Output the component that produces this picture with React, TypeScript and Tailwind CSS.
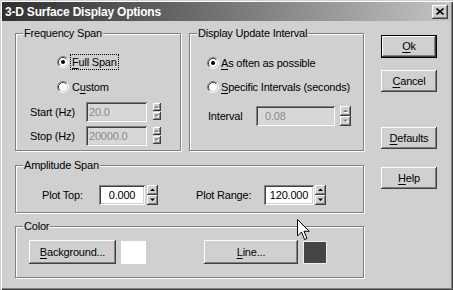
import React from "react";

const RAISED =
  "shadow-[inset_-1px_-1px_0_#404040,inset_1px_1px_0_#ffffff,inset_-2px_-2px_0_#808080]";
const SUNKEN =
  "shadow-[inset_1px_1px_0_#808080,inset_-1px_-1px_0_#ffffff,inset_2px_2px_0_#404040,inset_-2px_-2px_0_#d0d0d0]";
const ETCHED =
  "border border-[#808080] shadow-[inset_1px_1px_0_#ffffff,1px_1px_0_#ffffff]";

function U({ children }: { children: React.ReactNode }) {
  return <span className="underline underline-offset-[2px] decoration-1">{children}</span>;
}

function Radio({ checked }: { checked?: boolean }) {
  return (
    <svg width="12" height="12" viewBox="0 0 12 12" className="shrink-0">
      <circle cx="6" cy="6" r="4.5" fill="#ffffff" />
      <path d="M2.11 9.89 A5.5 5.5 0 0 1 9.89 2.11" fill="none" stroke="#808080" strokeWidth="1" />
      <path d="M9.89 2.11 A5.5 5.5 0 0 1 2.11 9.89" fill="none" stroke="#ffffff" strokeWidth="1" />
      <path d="M2.82 9.18 A4.5 4.5 0 0 1 9.18 2.82" fill="none" stroke="#404040" strokeWidth="1" />
      <path d="M9.18 2.82 A4.5 4.5 0 0 1 2.82 9.18" fill="none" stroke="#d0d0d0" strokeWidth="1" />
      {checked && <circle cx="6" cy="6" r="2" fill="#000000" />}
    </svg>
  );
}

function Arrow({ up, disabled }: { up?: boolean; disabled?: boolean }) {
  const pts = up ? "0,3 5,3 2.5,0.5" : "0,0.5 5,0.5 2.5,3";
  return (
    <svg width="6" height="4" viewBox="0 0 6 4">
      {disabled && (
        <polygon points={up ? "1,4 6,4 3.5,1.5" : "1,1.5 6,1.5 3.5,4"} fill="#ffffff" />
      )}
      <polygon points={pts} fill={disabled ? "#808080" : "#000000"} />
    </svg>
  );
}

function Spin({ disabled, narrow }: { disabled?: boolean; narrow?: boolean }) {
  if (narrow) {
    return (
      <div className="ml-[6px] mt-[1px] self-start flex flex-col gap-[1px] w-[8px]">
        <div className={`h-[8px] w-[8px] bg-[#d0d0d0] flex items-center justify-center ${RAISED}`}>
          <Arrow up disabled={disabled} />
        </div>
        <div className={`h-[8px] w-[8px] bg-[#d0d0d0] flex items-center justify-center ${RAISED}`}>
          <Arrow disabled={disabled} />
        </div>
      </div>
    );
  }
  return (
    <div className="flex flex-col w-[11px] h-[20px]">
      <div className={`h-[10px] w-[11px] bg-[#d0d0d0] flex items-center justify-center ${RAISED}`}>
        <Arrow up disabled={disabled} />
      </div>
      <div className={`h-[10px] w-[11px] bg-[#d0d0d0] flex items-center justify-center ${RAISED}`}>
        <Arrow disabled={disabled} />
      </div>
    </div>
  );
}

function Legend({ children }: { children: React.ReactNode }) {
  return (
    <span className="absolute left-[7px] top-[-9px] px-[1px] leading-[16px] bg-[#d0d0d0] whitespace-nowrap">
      {children}
    </span>
  );
}

export default function App() {
  return (
    <div className="relative w-[453px] h-[290px] overflow-hidden bg-[#d0d0d0] p-[2px] flex flex-col text-[11px] tracking-[-0.2px] leading-none text-black font-['Liberation_Sans',Arial,sans-serif] shadow-[inset_1px_1px_0_#d0d0d0,inset_2px_2px_0_#ffffff,inset_-1px_-1px_0_#404040,inset_-2px_-2px_0_#808080]">
      {/* Title bar */}
      <div className="h-[19px] shrink-0 flex items-center justify-between pl-[3px] pr-[3px] bg-linear-to-r from-[#303030] to-[#c4c4c4]">
        <span className="text-white font-bold text-[12px] whitespace-nowrap">3-D Surface Display Options</span>
        <div className={`w-[16px] h-[14px] bg-[#d0d0d0] flex items-center justify-center ${RAISED}`}>
          <svg width="8" height="7" viewBox="0 0 8 7">
            <path d="M0.5 0.5 L7.5 6.5 M7.5 0.5 L0.5 6.5" stroke="#000000" strokeWidth="1.6" />
          </svg>
        </div>
      </div>

      <div className="flex">
        {/* Left column */}
        <div className="ml-[13px] w-[349px] flex flex-col">
          <div className="mt-[12px] flex gap-[8px]">
            {/* Frequency Span */}
            <div className={`relative w-[166px] h-[118px] ${ETCHED} flex flex-col`}>
              <Legend>Frequency Span</Legend>
              <div className="mt-[20px] ml-[41px] h-[16px] flex items-center">
                <Radio checked />
                <span className="ml-[1px] px-[1px] h-[16px] flex items-center border border-dotted border-black">
                  <span>
                    <U>F</U>ull Span
                  </span>
                </span>
              </div>
              <div className="mt-[9px] ml-[41px] h-[16px] flex items-center">
                <Radio />
                <span className="ml-[3px]">
                  C<U>u</U>stom
                </span>
              </div>
              <div className="mt-[7px] ml-[14px] h-[20px] flex items-center">
                <span className="w-[56px]">Start (Hz)</span>
                <div className={`w-[61px] h-[20px] bg-[#d8d8d8] ${SUNKEN} flex items-center pl-[3px] text-[#8a8a8a]`}>
                  20.0
                </div>
                <Spin narrow disabled />
              </div>
              <div className="mt-[4px] ml-[14px] h-[20px] flex items-center">
                <span className="w-[56px]">Stop (Hz)</span>
                <div className={`w-[61px] h-[20px] bg-[#d8d8d8] ${SUNKEN} flex items-center pl-[3px] text-[#8a8a8a]`}>
                  20000.0
                </div>
                <Spin narrow disabled />
              </div>
            </div>

            {/* Display Update Interval */}
            <div className={`relative w-[175px] h-[118px] ${ETCHED} flex flex-col`}>
              <Legend>Display Update Interval</Legend>
              <div className="mt-[21px] ml-[17px] h-[16px] flex items-center">
                <Radio checked />
                <span className="ml-[2px]">
                  <U>A</U>s often as possible
                </span>
              </div>
              <div className="mt-[8px] ml-[17px] h-[16px] flex items-center">
                <Radio />
                <span className="ml-[2px] whitespace-nowrap">
                  <U>S</U>pecific Intervals (seconds)
                </span>
              </div>
              <div className="mt-[11px] ml-[18px] h-[20px] flex items-center">
                <span className="w-[48px]">Interval</span>
                <div className={`w-[79px] h-[20px] bg-[#d8d8d8] ${SUNKEN} flex items-center pl-[9px] text-[#8a8a8a]`}>
                  0.08
                </div>
                <div className="ml-[5px]">
                  <Spin disabled />
                </div>
              </div>
            </div>
          </div>

          {/* Amplitude Span */}
          <div className={`relative mt-[14px] w-[349px] h-[48px] ${ETCHED}`}>
            <Legend>Amplitude Span</Legend>
            <div className="mt-[19px] ml-[26px] h-[20px] flex items-center">
              <span className="w-[57px]">Plot Top:</span>
              <div className={`w-[46px] h-[20px] bg-white ${SUNKEN} flex items-center justify-center`}>0.000</div>
              <div className="ml-[2px]">
                <Spin />
              </div>
              <span className="ml-[38px] w-[68px]">Plot Range:</span>
              <div className={`w-[50px] h-[20px] bg-white ${SUNKEN} flex items-center justify-center`}>120.000</div>
              <div className="ml-[1px]">
                <Spin />
              </div>
            </div>
          </div>

          {/* Color */}
          <div className={`relative mt-[13px] w-[349px] h-[52px] ${ETCHED}`}>
            <Legend>Color</Legend>
            <div className="mt-[13px] ml-[13px] h-[24px] flex items-center">
              <div className={`w-[87px] h-[24px] bg-[#d0d0d0] ${RAISED} flex items-center justify-center`}>
                <span>
                  <U>B</U>ackground...
                </span>
              </div>
              <div className="ml-[5px] w-[25px] h-[23px] bg-white" />
              <div className={`ml-[58px] w-[94px] h-[24px] bg-[#d0d0d0] ${RAISED} flex items-center justify-center`}>
                <span>
                  <U>L</U>ine...
                </span>
              </div>
              <div className="ml-[5px] w-[24px] h-[23px] bg-[#454545] border border-[#eeeeee]" />
            </div>
          </div>
        </div>

        {/* Right column */}
        <div className="ml-[17px] w-[56px] flex flex-col">
          <div className={`mt-[14px] h-[23px] border border-black bg-[#d0d0d0] ${RAISED} flex items-center justify-center`}>
            <span>
              <U>O</U>k
            </span>
          </div>
          <div className={`mt-[12px] h-[22px] bg-[#d0d0d0] ${RAISED} flex items-center justify-center`}>
            <span>
              <U>C</U>ancel
            </span>
          </div>
          <div className={`mt-[35px] h-[22px] bg-[#d0d0d0] ${RAISED} flex items-center justify-center`}>
            <span>
              <U>D</U>efaults
            </span>
          </div>
          <div className={`mt-[18px] h-[22px] bg-[#d0d0d0] ${RAISED} flex items-center justify-center`}>
            <span>
              <U>H</U>elp
            </span>
          </div>
        </div>
      </div>

      {/* Mouse cursor */}
      <svg className="absolute left-[297px] top-[219px]" width="13" height="22" viewBox="0 0 13 22">
        <path
          d="M0.5 0.5 L0.5 17 L4.5 13 L7.5 20.5 L10 19.5 L7 12.3 L12.2 12.3 Z"
          fill="#ffffff"
          stroke="#000000"
          strokeWidth="1"
          strokeLinejoin="miter"
        />
      </svg>
    </div>
  );
}
